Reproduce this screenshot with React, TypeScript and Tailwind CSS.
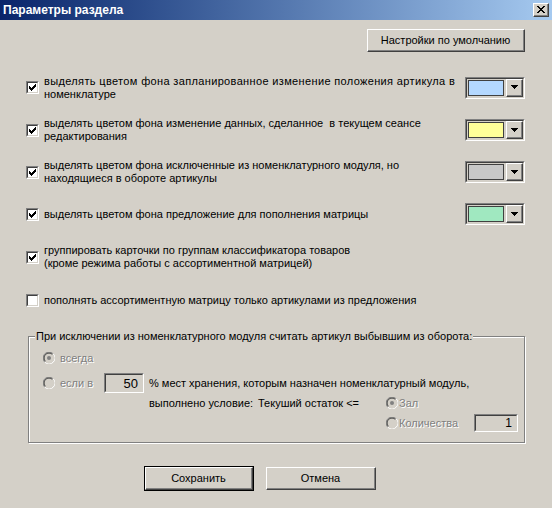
import type { ReactNode } from 'react';

// Classic 3D frames
function Raised({ className = '', children }: { className?: string; children?: ReactNode }) {
  return (
    <div className={`border border-t-white border-l-white border-r-[#404040] border-b-[#404040] bg-[#d4d0c8] ${className}`}>
      <div className="flex h-full w-full items-center justify-center border-r border-b border-r-[#808080] border-b-[#808080]">
        {children}
      </div>
    </div>
  );
}

function Sunken({ className = '', inner = '', children }: { className?: string; inner?: string; children?: ReactNode }) {
  return (
    <div className={`border border-t-[#808080] border-l-[#808080] border-r-white border-b-white ${className}`}>
      <div className={`h-full w-full border border-t-[#404040] border-l-[#404040] border-r-[#d4d0c8] border-b-[#d4d0c8] ${inner}`}>
        {children}
      </div>
    </div>
  );
}

function Checkbox({ checked }: { checked: boolean }) {
  return (
    <Sunken className="h-[13px] w-[13px] shrink-0" inner="bg-white">
      {checked && (
        <svg width="9" height="9" viewBox="0 0 9 9" shapeRendering="crispEdges">
          <g fill="#000">
            <rect x="1" y="3" width="1" height="3" />
            <rect x="2" y="4" width="1" height="3" />
            <rect x="3" y="5" width="1" height="3" />
            <rect x="4" y="4" width="1" height="3" />
            <rect x="5" y="3" width="1" height="3" />
            <rect x="6" y="2" width="1" height="3" />
            <rect x="7" y="1" width="1" height="3" />
          </g>
        </svg>
      )}
    </Sunken>
  );
}

// Disabled radio: grey face, grey dot
function Radio({ checked }: { checked: boolean }) {
  return (
    <svg width="12" height="12" viewBox="0 0 12 12" className="shrink-0">
      <circle cx="6" cy="6" r="5.5" fill="#d4d0c8" />
      <path d="M1.8 10.2 A5.5 5.5 0 0 1 10.2 1.8" stroke="#808080" strokeWidth="1" fill="none" />
      <path d="M10.2 1.8 A5.5 5.5 0 0 1 1.8 10.2" stroke="#ffffff" strokeWidth="1" fill="none" />
      <path d="M2.5 9.5 A4.5 4.5 0 0 1 9.5 2.5" stroke="#404040" strokeWidth="1" fill="none" />
      <path d="M9.5 2.5 A4.5 4.5 0 0 1 2.5 9.5" stroke="#d4d0c8" strokeWidth="1" fill="none" />
      {checked && <circle cx="6" cy="6" r="2" fill="#808080" />}
    </svg>
  );
}

function ColorCombo({ color }: { color: string }) {
  return (
    <Sunken className="ml-auto h-[22px] w-[60px] shrink-0" inner="flex bg-[#d4d0c8]">
      <div className="mt-[1px] ml-[1px] h-[16px] w-[36px] border border-[#404040]" style={{ backgroundColor: color }} />
      <Raised className="ml-auto h-full w-[17px]">
        <svg width="7" height="4" viewBox="0 0 7 4" shapeRendering="crispEdges">
          <path d="M0 0h7v1h-1v1h-1v1h-1v1h-1v-1h-1v-1h-1v-1h-1z" fill="#000" />
        </svg>
      </Raised>
    </Sunken>
  );
}

const Dim = ({ children }: { children: ReactNode }) => (
  <span className="text-[#808080] [text-shadow:1px_1px_0_#fff]">{children}</span>
);

const options = [
  { lines: ['выделять цветом фона запланированное изменение положения артикула в', 'номенклатуре'], color: '#b4d8ff', checked: true, h: 'h-[43px]', wide: true },
  { lines: ['выделять цветом фона изменение данных, сделанное  в текущем сеансе', 'редактирования'], color: '#ffff99', checked: true, h: 'h-[42px]' },
  { lines: ['выделять цветом фона исключенные из номенклатурного модуля, но', 'находящиеся в обороте артикулы'], color: '#c8c8c8', checked: true, h: 'h-[42px]' },
  { lines: ['выделять цветом фона предложение для пополнения матрицы'], color: '#a0e8c0', checked: true, h: 'h-[42px]' },
  { lines: ['группировать карточки по группам классификатора товаров', '(кроме режима работы с ассортиментной матрицей)'], checked: true, h: 'h-[44px]' },
  { lines: ['пополнять ассортиментную матрицу только артикулами из предложения'], checked: false, h: 'h-[42px]' },
];

export default function App() {
  return (
    <div className="h-[508px] w-[552px] overflow-hidden bg-[#d4d0c8] font-['Liberation_Sans',Arial,sans-serif] text-[11px] leading-[13px] text-black">
      {/* caption */}
      <div className="flex h-[20px] items-center bg-gradient-to-r from-[#0a246a] to-[#a6caf0] pr-[3px] pl-[3px]">
        <span className="text-[12px] font-bold text-white">Параметры раздела</span>
        <Raised className="ml-auto h-[14px] w-[16px]">
          <svg width="8" height="7" viewBox="0 0 8 7" shapeRendering="crispEdges">
            <path d="M0 0h2v1h1v1h2v-1h1v-1h2v1h-1v1h-1v1h-1v1h1v1h1v1h1v1h-2v-1h-1v-1h-2v1h-1v1h-2v-1h1v-1h1v-1h1v-1h-1v-1h-1v-1h-1z" fill="#000" />
          </svg>
        </Raised>
      </div>

      <div className="pr-[27px] pl-[26px]">
        <div className="mt-[9px] flex justify-end">
          <Raised className="h-[23px] w-[158px]">Настройки по умолчанию</Raised>
        </div>

        <div className="mt-[14px]">
          {options.map((o, i) => (
            <div key={i} className={`flex items-center ${o.h}`}>
              <Checkbox checked={o.checked} />
              <div className="ml-[5px] whitespace-pre">
                {o.lines.map((l, j) => (
                  <div key={l} className={o.wide && j === 0 ? 'tracking-[0.35px]' : ''}>
                    {l}
                  </div>
                ))}
              </div>
              {o.color && <ColorCombo color={o.color} />}
            </div>
          ))}
        </div>

        <fieldset className="mt-[9px] ml-[2px] border border-[#808080] pb-[10px] shadow-[1px_1px_0_#fff,inset_1px_1px_0_#fff]">
          <legend className="relative ml-[6px] bg-[#d4d0c8] px-[1px]">
            При исключении из номенклатурного модуля считать артикул выбывшим из оборота:
          </legend>

          <div className="mt-[8px] flex h-[14px] items-center pl-[14px]">
            <Radio checked />
            <span className="ml-[5px]"><Dim>всегда</Dim></span>
          </div>

          <div className="mt-[8px] flex h-[20px] items-center pl-[14px]">
            <Radio checked={false} />
            <span className="ml-[5px] w-[44px]"><Dim>если в</Dim></span>
            <Sunken className="h-[20px] w-[40px]" inner="flex items-center justify-end bg-[#d4d0c8] pr-[4px] text-[13px]">
              50
            </Sunken>
            <span className="ml-[5px]">% мест хранения, которым назначен номенклатурный модуль,</span>
          </div>

          <div className="mt-[3px] flex h-[14px] items-center pl-[120px]">
            <span className="w-[109px]">выполнено условие:</span>
            <span className="w-[128px]">Текуший остаток &lt;=</span>
            <Radio checked />
            <span className="ml-[1px]"><Dim>Зал</Dim></span>
          </div>

          <div className="mt-[4px] flex h-[18px] items-center pl-[357px]">
            <Radio checked={false} />
            <span className="ml-[1px] w-[75px]"><Dim>Количества</Dim></span>
            <Sunken className="h-[18px] w-[44px]" inner="flex items-center justify-end bg-[#d4d0c8] pr-[4px] text-[12px]">
              1
            </Sunken>
          </div>
        </fieldset>

        <div className="mt-[23px] ml-[118px] flex items-center gap-[12px]">
          <div className="h-[25px] w-[110px] border border-black">
            <Raised className="h-full w-full">Сохранить</Raised>
          </div>
          <Raised className="h-[23px] w-[110px]">Отмена</Raised>
        </div>
      </div>
    </div>
  );
}
